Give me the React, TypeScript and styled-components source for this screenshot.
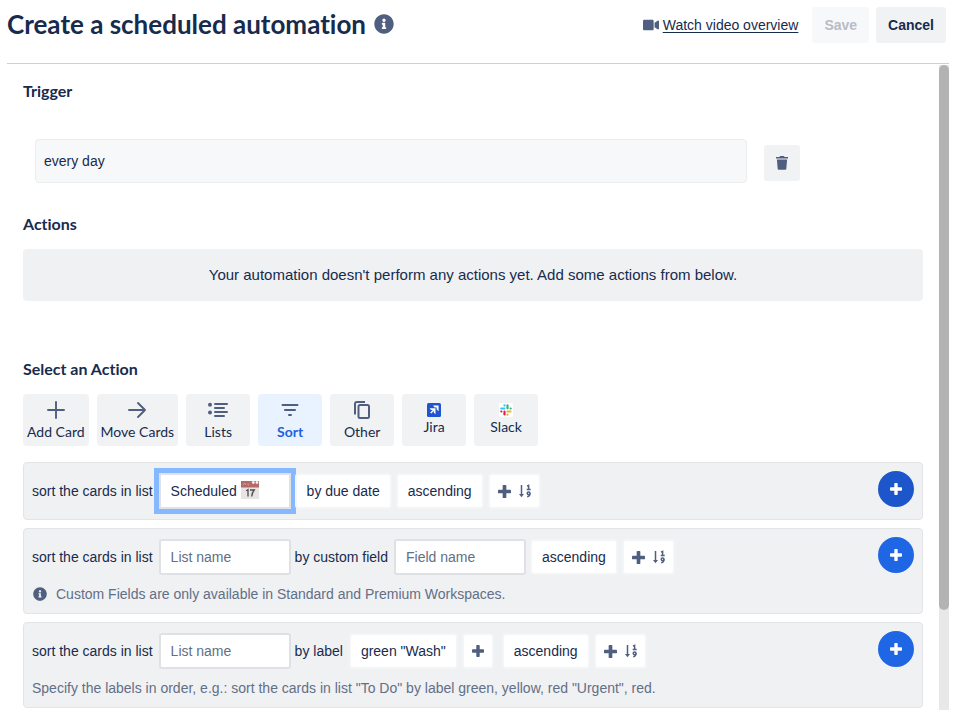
import React from "react";
import styled, { createGlobalStyle, css } from "styled-components";
import { FaInfoCircle, FaVideo } from "react-icons/fa";

const ink = "#172b4d";
const slate = "#505f7f";
const sans = '"Liberation Sans", Arial, Helvetica, sans-serif';
const display = 'Lato, "Open Sans", sans-serif';

const GlobalStyle = createGlobalStyle`
  *, *::before, *::after { box-sizing: border-box; }
  body {
    margin: 0;
    background: #fff;
    color: ${ink};
    font: 14px/20px ${sans};
    font-variant-ligatures: none;
  }
  button, input { font: inherit; color: inherit; margin: 0; }
  button { border: 0; cursor: pointer; }
  svg { display: block; flex: none; }
`;

const Page = styled.div`
  display: flex;
  flex-direction: column;
  height: 100vh;
  padding: 7px 7px 5px;
  overflow: hidden;
`;

const Header = styled.header`
  display: flex;
  align-items: flex-start;
  justify-content: space-between;
  height: 57px;
  flex: none;
  padding-right: 3px;
  border-bottom: 1px solid #cfd0d2;
`;

const TitleGroup = styled.div`
  display: flex;
  align-items: center;
  gap: 8px;
  height: 34px;
  color: ${slate};
`;

const Title = styled.h1`
  margin: 0;
  font: 700 26px/34px ${display};
  font-variant-ligatures: none;
  color: ${ink};
`;

const HeaderActions = styled.div`
  display: flex;
  align-items: center;
  gap: 7px;
`;

const VideoLink = styled.a`
  display: flex;
  align-items: center;
  gap: 4px;
  margin-right: 7px;
  color: ${ink};
  text-decoration: none;
  svg { color: ${slate}; }
  span { text-decoration: underline; text-underline-offset: 2px; }
`;

const Button = styled.button`
  height: 36px;
  padding: 0 12px;
  border-radius: 3px;
  background: #f1f2f4;
  font-weight: 700;
  &:disabled { background: #f7f8f9; color: #b7bcc6; cursor: default; }
`;

const Body = styled.div`
  display: flex;
  flex: 1;
  min-height: 0;
`;

const Content = styled.main`
  flex: 1;
  min-width: 0;
  padding: 15px 16px 0;
  overflow: hidden;
`;

const Track = styled.div`
  width: 10px;
  margin-top: 1px;
  flex: none;
  background: #e8e8e8;
`;

const Thumb = styled.div`
  height: 84.5%;
  border-radius: 5px;
  background: #b3b3b3;
`;

const Heading = styled.h2`
  margin: 0;
  font: 700 16px/24px ${display};
  font-variant-ligatures: none;
`;

const TriggerRow = styled.div`
  display: flex;
  align-items: flex-start;
  gap: 17px;
  margin: 36px 123px 29px 12px;
`;

const TriggerText = styled.div`
  flex: 1;
  padding: 11px 8px;
  border: 1px solid #ebecee;
  border-radius: 4px;
  background: #f7f8f9;
`;

const IconButton = styled.button`
  display: grid;
  place-items: center;
  width: 36px;
  height: 36px;
  margin-top: 6px;
  padding: 0;
  border-radius: 3px;
  background: #f1f2f4;
  color: ${slate};
`;

const EmptyNotice = styled.p`
  margin: 13px 0 56px;
  padding: 16px;
  border-radius: 4px;
  background: #f0f1f3;
  font-size: 15px;
  text-align: center;
`;

const Tabs = styled.div`
  display: flex;
  gap: 8px;
  margin: 13px 0 16px;
`;

const Tab = styled.button<{ $active?: boolean }>`
  display: flex;
  flex-direction: column;
  align-items: center;
  min-width: 64px;
  height: 52px;
  padding: 4px;
  border-radius: 4px;
  background: #f1f2f4;
  font: 400 14px/20px ${display};
  svg { color: ${slate}; }
  ${(p) =>
    p.$active &&
    css`
      background: #e9f2ff;
      color: #1d63e0;
      font-weight: 700;
    `}
`;

const TabArt = styled.span<{ $small?: boolean }>`
  display: grid;
  place-items: center;
  height: ${(p) => (p.$small ? 19 : 24)}px;
  padding-top: ${(p) => (p.$small ? 4 : 0)}px;
`;

const Rows = styled.div`
  display: flex;
  flex-direction: column;
  gap: 8px;
`;

const ActionCard = styled.section`
  display: flex;
  align-items: flex-start;
  justify-content: space-between;
  padding: 8px;
  border: 1px solid #e3e4e8;
  border-radius: 4px;
  background: #f0f1f3;
`;

const CardMain = styled.div`
  padding: 2px 0;
`;

const Sentence = styled.div`
  display: flex;
  align-items: center;
  gap: 4px;
  white-space: nowrap;
`;

const Words = styled.span`
  padding-right: 2px;
`;

const Field = styled.div`
  position: relative;
  width: 132px;
`;

const TextInput = styled.input<{ $focused?: boolean }>`
  display: block;
  width: 100%;
  height: 36px;
  padding: 0 10px;
  border: 2px solid #dfe1e5;
  border-radius: 3px;
  outline: 0;
  background: #fff;
  &::placeholder { color: #626f86; opacity: 1; }
  ${(p) => p.$focused && css`box-shadow: 0 0 0 5px #85b8ff; border-radius: 0;`}
`;

const Emoji = styled.svg`
  position: absolute;
  left: 82px;
  top: 8px;
`;

const Chip = styled.button<{ $tight?: boolean; $apart?: boolean }>`
  position: relative;
  display: flex;
  align-items: center;
  gap: 8px;
  height: 36px;
  padding: 0 ${(p) => (p.$tight ? 8 : 10)}px;
  margin-right: ${(p) => (p.$apart ? 4 : 0)}px;
  border: 2px solid #f4f5f7;
  border-radius: 4px;
  background: #fff;
  svg { color: ${slate}; }
`;

const Hint = styled.p`
  display: flex;
  align-items: center;
  gap: 9px;
  margin: 10px 0 0;
  line-height: 18px;
  color: #626f86;
  svg { color: ${slate}; margin-left: 1px; }
`;

const AddButton = styled.button<{ $hover?: boolean }>`
  display: grid;
  place-items: center;
  flex: none;
  width: 36px;
  height: 36px;
  padding: 0;
  border-radius: 50%;
  background: ${(p) => (p.$hover ? "#1d55cb" : "#1f66e5")};
  color: #fff;
`;

const PlusIcon = ({ size }: { size: number }) => (
  <svg width={size} height={size} viewBox="0 0 12 12" fill="currentColor">
    <rect x="4.300" y="0" width="3.400" height="12" rx=".8" />
    <rect x="0" y="4.300" width="12" height="3.400" rx=".8" />
  </svg>
);

const TrashIcon = () => (
  <svg width="14" height="16" viewBox="0 0 14 16" fill="currentColor">
    <path d="M1 2h3.500L5 1h4l.5 1H13v1.600H1z" />
    <path d="M1.900 4.600h10.200l-.8 9.400c-.05.500-.4.800-.9.800H3.600c-.5 0-.85-.3-.9-.8z" />
  </svg>
);

const AddIcon = () => (
  <svg width="24" height="24" viewBox="0 0 24 24" stroke="currentColor" strokeWidth="1.900" strokeLinecap="round">
    <path d="M12 4v16M4 12h16" />
  </svg>
);

const ArrowIcon = () => (
  <svg width="24" height="24" viewBox="0 0 24 24" fill="none" stroke="currentColor" strokeWidth="1.900" strokeLinecap="round" strokeLinejoin="round">
    <path d="M4 12h16M13 5l7 7-7 7" />
  </svg>
);

const ListIcon = () => (
  <svg width="24" height="24" viewBox="0 0 24 24" fill="currentColor" strokeLinecap="round">
    <circle cx="4" cy="6.800" r="2" />
    <circle cx="4" cy="14.500" r="2" />
    <path d="M9 6h12M9 10h9M9 14h12M9 18h9" stroke="currentColor" strokeWidth="2" />
  </svg>
);

const SortIcon = () => (
  <svg width="24" height="24" viewBox="0 0 24 24" stroke="currentColor" strokeWidth="2" strokeLinecap="round">
    <path d="M4.500 7h15M7 12h10M11 17h2" />
  </svg>
);

const CopyIcon = () => (
  <svg width="24" height="24" viewBox="0 0 24 24" fill="none" stroke="currentColor" strokeWidth="2">
    <path d="M5 16.500V6a2 2 0 0 1 2-2h8" />
    <rect x="8.500" y="7" width="10.500" height="13" rx="1.500" />
  </svg>
);

const JiraIcon = () => (
  <svg width="14" height="14" viewBox="0 0 14 14">
    <rect width="14" height="14" rx="1.500" fill="#1d56d0" />
    <path d="M6 2.600h5.600v5.600L9.700 6.600V4.500H7.600z" fill="#fff" />
    <path d="M2.600 5.300h5.900v5.900L6.900 9.700V8.100L4.200 10.600 3.200 9.600 5.700 6.900H4z" fill="#fff" />
  </svg>
);

const SlackIcon = () => (
  <svg width="14" height="14" viewBox="0 0 14 14" fill="none" strokeWidth="2.200" strokeLinecap="round">
    <rect width="14" height="14" rx="1.500" fill="#fff" />
    <path d="M2.300 5.500h3M5.500 2.300v.1" stroke="#36c5f0" />
    <path d="M8.500 2.300v3M11.600 5.500h.1" stroke="#2eb67d" />
    <path d="M8.500 8.500h3M8.500 11.600v.1" stroke="#ecb22e" />
    <path d="M5.500 8.500v3M2.300 8.500h.1" stroke="#e01e5a" />
  </svg>
);

const OrderIcon = () => (
  <svg width="12" height="14" viewBox="0 0 12 14" fill="none" stroke="currentColor">
    <path d="M2.500 1v10" strokeWidth="1.500" />
    <path d="M0 10L2.500 13.200L5 10z" fill="currentColor" stroke="none" />
    <path d="M8 2.200l1.600-.8v4M7.700 5.400h4" strokeWidth="1.500" />
    <circle cx="9.600" cy="9.300" r="1.400" strokeWidth="1.500" />
    <path d="M11 9.300c0 2-.8 3.200-2.800 3.500" strokeWidth="1.400" />
  </svg>
);

const CalendarEmoji = () => (
  <Emoji width="18" height="18" viewBox="0 0 18 18" role="img" aria-label="calendar">
    <rect width="18" height="18" fill="#e6e5e3" />
    <rect width="18" height="6.500" fill="#b66a68" />
    <path d="M2 4l1.500-2L5 4M7 2.500v1.500h1" stroke="#d9a6a3" strokeWidth=".8" fill="none" />
    <circle cx="12.300" cy="1.500" r="1.400" fill="#f4eeee" />
    <circle cx="16" cy="1.500" r="1.400" fill="#f4eeee" />
    <path d="M5.200 9.800L7 8.600V15.500M9 9h4.200c-1.600 2-2.300 4-2.500 6.500" stroke="#4c4c4c" strokeWidth="1.300" fill="none" />
  </Emoji>
);

const OrderChip = () => (
  <Chip $tight aria-label="Add another sort order">
    <PlusIcon size={13} />
    <OrderIcon />
  </Chip>
);

const ListField = ({ label }: { label: string }) => (
  <Field>
    <TextInput placeholder={label} aria-label={label} />
  </Field>
);

const tabs = [
  { label: "Add Card", art: <AddIcon /> },
  { label: "Move Cards", art: <ArrowIcon /> },
  { label: "Lists", art: <ListIcon /> },
  { label: "Sort", art: <SortIcon />, active: true },
  { label: "Other", art: <CopyIcon /> },
  { label: "Jira", art: <JiraIcon />, small: true },
  { label: "Slack", art: <SlackIcon />, small: true },
];

export default function App() {
  return (
    <Page>
      <GlobalStyle />
      <Header>
        <TitleGroup>
          <Title>Create a scheduled automation</Title>
          <FaInfoCircle size={20} />
        </TitleGroup>
        <HeaderActions>
          <VideoLink href="#overview">
            <FaVideo size={16} />
            <span>Watch video overview</span>
          </VideoLink>
          <Button disabled>Save</Button>
          <Button>Cancel</Button>
        </HeaderActions>
      </Header>
      <Body>
        <Content>
          <Heading>Trigger</Heading>
          <TriggerRow>
            <TriggerText>every day</TriggerText>
            <IconButton aria-label="Delete trigger">
              <TrashIcon />
            </IconButton>
          </TriggerRow>
          <Heading>Actions</Heading>
          <EmptyNotice>
            Your automation doesn't perform any actions yet. Add some actions from below.
          </EmptyNotice>
          <Heading>Select an Action</Heading>
          <Tabs>
            {tabs.map((t) => (
              <Tab key={t.label} $active={t.active}>
                <TabArt $small={t.small}>{t.art}</TabArt>
                {t.label}
              </Tab>
            ))}
          </Tabs>
          <Rows>
            <ActionCard>
              <CardMain>
                <Sentence>
                  <Words>sort the cards in list</Words>
                  <Field>
                    <TextInput $focused defaultValue="Scheduled" aria-label="List name" />
                    <CalendarEmoji />
                  </Field>
                  <Chip>by due date</Chip>
                  <Chip>ascending</Chip>
                  <OrderChip />
                </Sentence>
              </CardMain>
              <AddButton $hover aria-label="Add action">
                <PlusIcon size={12} />
              </AddButton>
            </ActionCard>
            <ActionCard>
              <CardMain>
                <Sentence>
                  <Words>sort the cards in list</Words>
                  <ListField label="List name" />
                  <Words>by custom field</Words>
                  <ListField label="Field name" />
                  <Chip>ascending</Chip>
                  <OrderChip />
                </Sentence>
                <Hint>
                  <FaInfoCircle size={14} />
                  Custom Fields are only available in Standard and Premium Workspaces.
                </Hint>
              </CardMain>
              <AddButton aria-label="Add action">
                <PlusIcon size={12} />
              </AddButton>
            </ActionCard>
            <ActionCard>
              <CardMain>
                <Sentence>
                  <Words>sort the cards in list</Words>
                  <ListField label="List name" />
                  <Words>by label</Words>
                  <Chip>green "Wash"</Chip>
                  <Chip $tight $apart aria-label="Add label">
                    <PlusIcon size={12} />
                  </Chip>
                  <Chip>ascending</Chip>
                  <OrderChip />
                </Sentence>
                <Hint>
                  Specify the labels in order, e.g.: sort the cards in list "To Do" by label green, yellow, red "Urgent", red.
                </Hint>
              </CardMain>
              <AddButton aria-label="Add action">
                <PlusIcon size={12} />
              </AddButton>
            </ActionCard>
          </Rows>
        </Content>
        <Track>
          <Thumb />
        </Track>
      </Body>
    </Page>
  );
}
